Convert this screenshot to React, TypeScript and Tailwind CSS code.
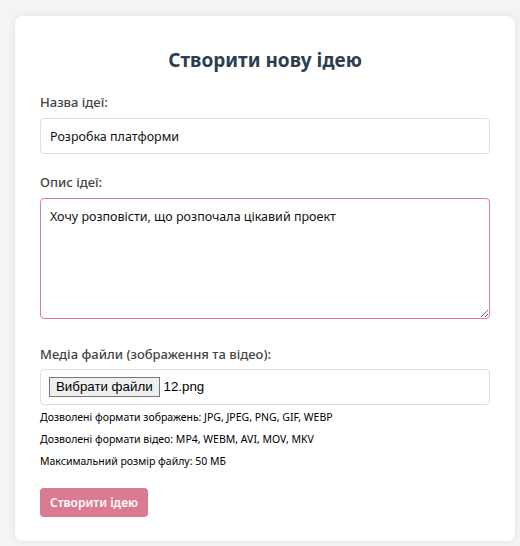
import { useState } from "react";

const font = { fontFamily: '"Noto Sans", "Open Sans", sans-serif' };

const CreateIdeaPage = () => {
  const [title, setTitle] = useState("Розробка платформи");
  const [description, setDescription] = useState(
    "Хочу розповісти, що розпочала цікавий проект"
  );

  return (
    <div className="min-h-[546px] bg-[#f4f4f4] px-[15px] pt-4" style={font}>
      <div className="w-[500px] rounded-lg bg-white px-[25px] pt-[30px] pb-[24px] shadow-[0_0_8px_rgba(0,0,0,0.08)]">
        <h2 className="text-center text-[19px] font-bold leading-[28px] text-[#2c3e50]">
          Створити нову ідею
        </h2>

        <form className="mt-[20px]" onSubmit={(e) => e.preventDefault()}>
          <div className="mb-[20px]">
            <label className="mb-[8px] block text-[13px] font-medium leading-[16px] text-[#444]">
              Назва ідеї:
            </label>
            <input
              value={title}
              onChange={(e) => setTitle(e.target.value)}
              className="block h-[36px] w-full rounded border border-[#ddd] px-[9px] text-[12.5px] text-[#111] outline-none"
            />
          </div>

          {/* focused textarea */}
          <div className="mb-[27px]">
            <label className="mb-[8px] block text-[13px] font-medium leading-[16px] text-[#444]">
              Опис ідеї:
            </label>
            <textarea
              value={description}
              onChange={(e) => setDescription(e.target.value)}
              className="block h-[121px] w-full resize-y rounded border border-[#e07896] px-[9px] py-[8px] text-[12.5px] leading-[20px] text-[#111] outline-none"
            />
          </div>

          <div>
            <label className="mb-[7px] block text-[13px] font-medium leading-[16px] text-[#444]">
              Медіа файли (зображення та відео):
            </label>
            <div className="flex h-[36px] items-center rounded border border-[#ddd] px-[8px]">
              <button
                type="button"
                className="h-[20px] border border-[#767676] bg-[#efefef] px-[6px] text-[13.3px] leading-[18px] text-black"
                style={{ fontFamily: '"Liberation Sans", Arial, sans-serif' }}
              >
                Вибрати файли
              </button>
              <span
                className="ml-[4px] text-[13.3px] text-black"
                style={{ fontFamily: '"Liberation Sans", Arial, sans-serif' }}
              >
                12.png
              </span>
            </div>
            <div className="mt-[4px] flex flex-col gap-[5px] text-[10.5px] leading-[17px] text-black">
              <p>Дозволені формати зображень: JPG, JPEG, PNG, GIF, WEBP</p>
              <p>Дозволені формати відео: MP4, WEBM, AVI, MOV, MKV</p>
              <p>Максимальний розмір файлу: 50 МБ</p>
            </div>
          </div>

          <button
            type="submit"
            className="mt-[18px] h-[29px] w-[108px] rounded bg-[#db7a90] text-[12px] font-semibold text-white"
          >
            Створити ідею
          </button>
        </form>
      </div>
    </div>
  );
};

export default CreateIdeaPage;
